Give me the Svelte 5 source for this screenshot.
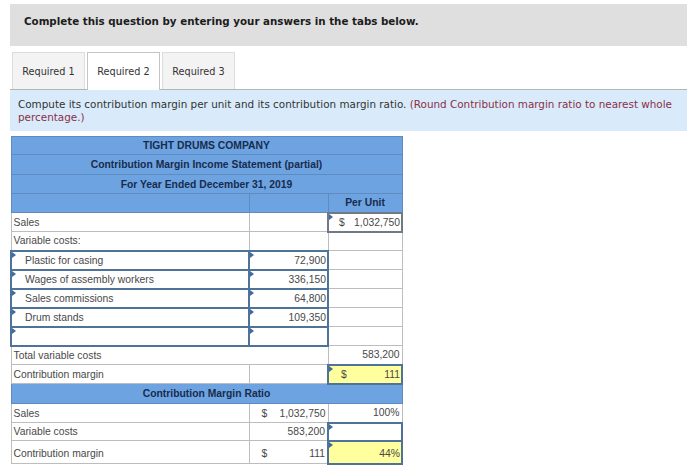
<script>
    const tabs = ["Required 1", "Required 2", "Required 3"];
    const active = 1;

    const costs = [
        { label: "Plastic for casing", amount: "72,900" },
        { label: "Wages of assembly workers", amount: "336,150" },
        { label: "Sales commissions", amount: "64,800" },
        { label: "Drum stands", amount: "109,350" },
        { label: "", amount: "" }
    ];
</script>

<div class="page">
    <div class="banner">Complete this question by entering your answers in the tabs below.</div>

    <div class="tabs">
        {#each tabs as tab, i}
            <div class="tab" class:active={i === active}>{tab}</div>
        {/each}
    </div>

    <div class="prompt">
        Compute its contribution margin per unit and its contribution margin ratio.
        <span class="hint">(Round Contribution margin ratio to nearest whole percentage.)</span>
    </div>

    <table>
        <colgroup>
            <col class="c1" />
            <col class="c2" />
            <col class="c3" />
        </colgroup>
        <tbody>
            <tr class="head h18"><th colspan="3">TIGHT DRUMS COMPANY</th></tr>
            <tr class="head h20"><th colspan="3">Contribution Margin Income Statement (partial)</th></tr>
            <tr class="head"><th colspan="3">For Year Ended December 31, 2019</th></tr>
            <tr class="head">
                <th></th>
                <th></th>
                <th>Per Unit</th>
            </tr>
            <tr>
                <td>Sales</td>
                <td></td>
                <td class="num input grey"><div class="money"><span>$</span><span>1,032,750</span></div></td>
            </tr>
            <tr>
                <td>Variable costs:</td>
                <td></td>
                <td></td>
            </tr>
            {#each costs as row}
                <tr>
                    <td class="input indent">{row.label}</td>
                    <td class="num input">{row.amount}</td>
                    <td></td>
                </tr>
            {/each}
            <tr>
                <td colspan="2">Total variable costs</td>
                <td class="num">583,200</td>
            </tr>
            <tr>
                <td>Contribution margin</td>
                <td></td>
                <td class="num input filled"><div class="money pad"><span>$</span><span>111</span></div></td>
            </tr>
            <tr class="head h20"><th colspan="3">Contribution Margin Ratio</th></tr>
            <tr>
                <td>Sales</td>
                <td class="num"><div class="money pad"><span>$</span><span>1,032,750</span></div></td>
                <td class="num">100%</td>
            </tr>
            <tr class="h18">
                <td>Variable costs</td>
                <td class="num">583,200</td>
                <td class="num input"></td>
            </tr>
            <tr class="last">
                <td>Contribution margin</td>
                <td class="num"><div class="money pad"><span>$</span><span>111</span></div></td>
                <td class="num input filled">44%</td>
            </tr>
        </tbody>
    </table>
</div>

<style>
    :global(body) {
        margin: 0;
        background: #fff;
    }

    .page {
        width: 700px;
        height: 470px;
        overflow: hidden;
        padding: 4px 13px 0 10px;
        box-sizing: border-box;
        font-family: "DejaVu Sans", Verdana, sans-serif;
    }

    .banner {
        height: 42px;
        padding: 10px 0 0 14px;
        box-sizing: border-box;
        background: #dfdfdf;
        color: #1c1c1c;
        font-size: 10.3px;
        font-weight: bold;
        line-height: 14px;
    }

    .tabs {
        display: flex;
        gap: 2px;
        margin-top: 6px;
        padding-left: 2px;
        height: 37px;
    }

    .tab {
        width: 73px;
        box-sizing: border-box;
        border: 1px solid #ddd;
        border-bottom: 0;
        background: #f3f3f3;
        color: #333;
        font-size: 9.7px;
        line-height: 38px;
        text-align: center;
    }

    .tab.active {
        background: #fff;
        border-color: #c4c4c4;
        height: 38px;
        position: relative;
        z-index: 1;
    }

    .prompt {
        height: 42px;
        padding: 8px 8px 0 8px;
        box-sizing: border-box;
        border-top: 1px solid #b5b5b5;
        background: #d9ebfa;
        color: #333;
        font-size: 10.4px;
        line-height: 13px;
    }

    .hint {
        color: #8a2f48;
    }

    table {
        margin-top: 5px;
        width: 391px;
        table-layout: fixed;
        border-collapse: collapse;
        font-family: "Liberation Sans", Arial, sans-serif;
        font-size: 10.35px;
        color: #484848;
        border: 1px solid #888;
    }

    .c1 {
        width: 238px;
    }

    .c2 {
        width: 79px;
    }

    .c3 {
        width: 74px;
    }

    tr {
        height: 19px;
    }

    tr.h18 {
        height: 18px;
    }

    tr.h20 {
        height: 20px;
    }

    tr.last {
        height: 23px;
    }

    tr.last td {
        padding-top: 2px;
    }

    th {
        padding: 0;
        background: #6ea3e2;
        color: #182c4c;
        font-weight: bold;
        border: 1px solid #5f8cc0;
    }

    td {
        padding: 0 2px;
        border: 1px solid #bdbdbd;
        position: relative;
    }

    .num {
        text-align: right;
    }

    td.indent {
        padding-left: 13px;
    }

    td.input {
        border: 2px solid #4f7299;
    }

    td.num.input {
        padding-right: 1px;
    }

    td.grey {
        border-color: #6f7a84;
    }

    .input::before {
        content: "";
        position: absolute;
        top: 0;
        left: 0;
        border-style: solid;
        border-width: 3px 0 3px 4px;
        border-color: transparent transparent transparent #3d6ba3;
    }

    .filled {
        background: #ffff9e;
    }

    .money {
        display: flex;
        justify-content: space-between;
        padding-left: 8px;
    }

    .money.pad {
        padding-left: 10px;
    }
</style>
